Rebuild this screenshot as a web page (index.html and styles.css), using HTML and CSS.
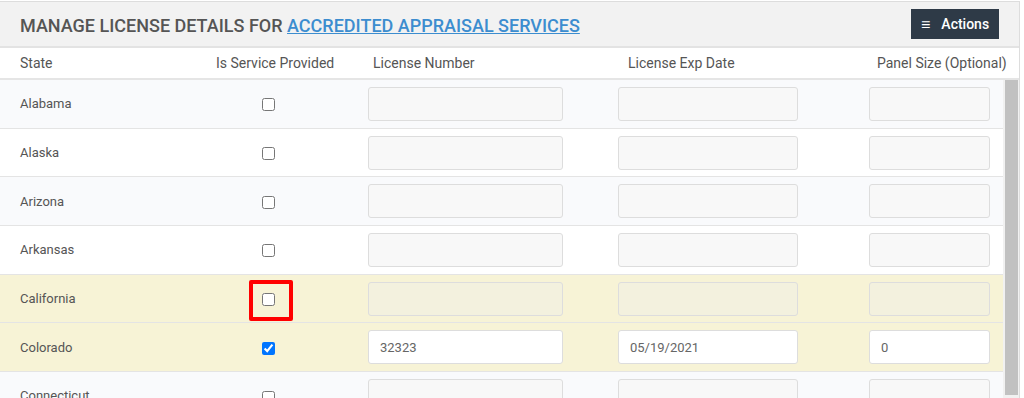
FILE: index.html
```html
<!DOCTYPE html>
<html>
   <head>
      <meta charset="utf-8">
      <title>Manage License Details</title>
      <link rel="stylesheet" href="styles.css">
   </head>
   <body>
      <div class="panel">
         <div class="panel-head">
            <h2 class="title">Manage License Details for <a href="#">Accredited Appraisal Services</a></h2>
            <button class="actions"><span class="bars">&#8801;</span>Actions</button>
         </div>
         <div class="grid cols">
            <div class="c-state">State</div>
            <div class="c-check">Is Service Provided</div>
            <div class="c-num">License Number</div>
            <div class="c-exp">License Exp Date</div>
            <div class="c-size">Panel Size (Optional)</div>
         </div>
         <div class="body">
            <div class="rows">
               <div class="grid row odd">
                  <div class="c-state">Alabama</div>
                  <div class="c-check"><input type="checkbox"></div>
                  <div class="c-num"><input type="text" class="num" disabled></div>
                  <div class="c-exp"><input type="text" class="exp" disabled></div>
                  <div class="c-size"><input type="text" class="size" disabled></div>
               </div>
               <div class="grid row">
                  <div class="c-state">Alaska</div>
                  <div class="c-check"><input type="checkbox"></div>
                  <div class="c-num"><input type="text" class="num" disabled></div>
                  <div class="c-exp"><input type="text" class="exp" disabled></div>
                  <div class="c-size"><input type="text" class="size" disabled></div>
               </div>
               <div class="grid row odd">
                  <div class="c-state">Arizona</div>
                  <div class="c-check"><input type="checkbox"></div>
                  <div class="c-num"><input type="text" class="num" disabled></div>
                  <div class="c-exp"><input type="text" class="exp" disabled></div>
                  <div class="c-size"><input type="text" class="size" disabled></div>
               </div>
               <div class="grid row">
                  <div class="c-state">Arkansas</div>
                  <div class="c-check"><input type="checkbox"></div>
                  <div class="c-num"><input type="text" class="num" disabled></div>
                  <div class="c-exp"><input type="text" class="exp" disabled></div>
                  <div class="c-size"><input type="text" class="size" disabled></div>
               </div>
               <div class="grid row hl">
                  <div class="c-state">California</div>
                  <div class="c-check"><span class="marked"><input type="checkbox"></span></div>
                  <div class="c-num"><input type="text" class="num" disabled></div>
                  <div class="c-exp"><input type="text" class="exp" disabled></div>
                  <div class="c-size"><input type="text" class="size" disabled></div>
               </div>
               <div class="grid row hl">
                  <div class="c-state">Colorado</div>
                  <div class="c-check"><input type="checkbox" checked></div>
                  <div class="c-num"><input type="text" class="num" value="32323"></div>
                  <div class="c-exp"><input type="text" class="exp" value="05/19/2021"></div>
                  <div class="c-size"><input type="text" class="size" value="0"></div>
               </div>
               <div class="grid row odd">
                  <div class="c-state">Connecticut</div>
                  <div class="c-check"><input type="checkbox"></div>
                  <div class="c-num"><input type="text" class="num" disabled></div>
                  <div class="c-exp"><input type="text" class="exp" disabled></div>
                  <div class="c-size"><input type="text" class="size" disabled></div>
               </div>
            </div>
            <div class="track"><div class="thumb"></div></div>
         </div>
      </div>
   </body>
</html>
```

FILE: styles.css
```css
body{
margin: 0;
background: #ffffff;
font-family: Roboto, "Liberation Sans", sans-serif;
color: #555555;
overflow: hidden;
}
.panel{
width: 1019px;
height: 397px;
margin-top: 1px;
border-top: 1px solid #dddddd;
border-right: 1px solid #dddddd;
overflow: hidden;
}
.panel-head{
height: 44px;
background: #f2f2f2;
border-bottom: 2px solid #e3e3e3;
display: flex;
align-items: center;
justify-content: space-between;
padding: 0 20px;
}
.title{
margin: 0;
padding-top: 3px;
font-size: 18px;
font-weight: 500;
text-transform: uppercase;
color: #555555;
}
.title a{
color: #3c8dcf;
text-decoration: underline;
}
.actions{
width: 88px;
height: 30px;
margin-right: 0;
background: #2e3a47;
color: #ffffff;
border: none;
font-family: Roboto, "Liberation Sans", sans-serif;
font-size: 14px;
font-weight: 500;
display: flex;
align-items: center;
padding: 0 0 0 10px;
}
.bars{
font-size: 16px;
margin-right: 11px;
}
.grid{
display: grid;
grid-template-columns: 218px 100px 250px 250px 185px;
align-items: center;
}
.cols{
height: 30px;
background: #ffffff;
border-bottom: 2px solid #e5e5e5;
font-size: 14px;
}
.cols .c-state{ padding-left: 20px; }
.cols .c-check{ white-space: nowrap; margin-left: -2px; }
.cols .c-num{ padding-left: 55px; }
.cols .c-exp{ padding-left: 60px; }
.cols .c-size{ padding-left: 59px; white-space: nowrap; }
.body{
display: flex;
}
.rows{
width: 1003px;
}
.row{
height: 47.7px;
border-bottom: 1px solid #e4e4e4;
font-size: 13px;
background: #ffffff;
}
.row.odd{ background: #f9fafc; }
.row.hl{ background: #f7f3d6; }
.row .c-state{ padding-left: 20px; }
.row .c-check{ text-align: center; }
.row .c-check input{ margin: 0; width: 13px; height: 13px; vertical-align: middle; }
.row .c-num, .row .c-exp{ padding-left: 50px; }
.row .c-size{ padding-left: 51px; }
.row input[type="text"]{
box-sizing: border-box;
height: 34px;
border: 1px solid #dddddd;
border-radius: 3px;
background: #ffffff;
padding: 0 11px;
font-family: Roboto, "Liberation Sans", sans-serif;
font-size: 13px;
color: #666666;
}
.row input[type="text"]:disabled{ background: #f8f8f8; }
.row.hl input[type="text"]:disabled{ background: #f3f1de; }
.num{ width: 195px; }
.exp{ width: 180px; }
.size{ width: 121px; }
.marked{
position: relative;
display: inline-block;
line-height: 0;
}
.marked::after{
content: "";
position: absolute;
left: -13px;
top: -13px;
width: 36px;
height: 33px;
border: 4px solid #ff0000;
border-radius: 2px;
}
.track{
width: 16px;
background: #f1f1f1;
padding: 0 1px 0 2px;
box-sizing: border-box;
}
.thumb{
width: 13px;
height: 315px;
background: #c1c1c1;
}
```
